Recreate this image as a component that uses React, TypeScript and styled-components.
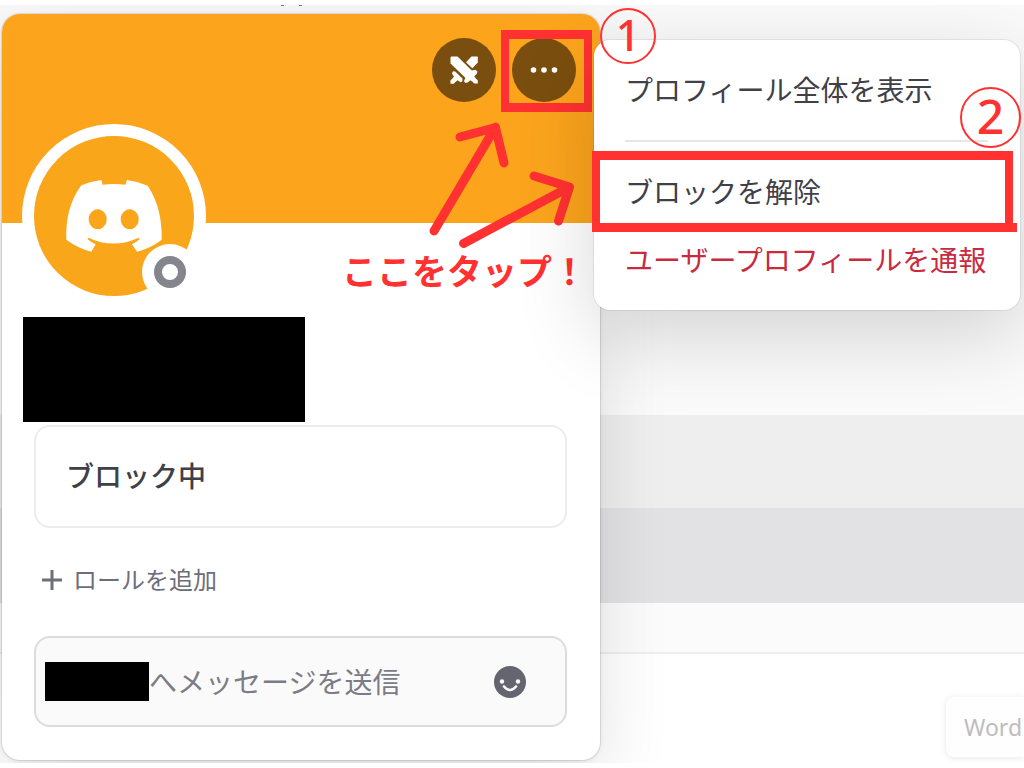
import React from 'react';
import styled, { createGlobalStyle, css } from 'styled-components';

const RED = '#ff3131';

const GlobalStyle = createGlobalStyle`
  *, *::before, *::after { box-sizing: border-box; }
  body {
    margin: 0;
    background: #ffffff;
    font-family: "Noto Sans", "Noto Sans CJK JP", sans-serif;
    color: #3f4048;
  }
  button, input {
    font: inherit;
    color: inherit;
    border: 0;
    background: none;
    padding: 0;
    margin: 0;
  }
  button { cursor: pointer; }
`;

const Page = styled.main`
  padding: 5px 0;
`;

const Scene = styled.div`
  display: grid;
  grid-template-columns: minmax(0, 1fr);
  overflow: hidden;
`;

/* Chat window behind the popout */
const Backdrop = styled.div`
  grid-area: 1 / 1;
  display: flex;
  flex-direction: column;
`;

const Band = styled.div<{ $tone: string; $height: number }>`
  height: ${(p) => p.$height}px;
  background: ${(p) => p.$tone};
`;

const CutText = styled.svg`
  display: block;
  margin-left: 280px;
`;

const Composer = styled.div`
  flex: 1;
  display: flex;
  justify-content: flex-end;
  align-items: flex-start;
  padding-top: 43px;
  border-top: 2px solid #eeeeee;
  background: #ffffff;
`;

const WordChip = styled.div`
  width: 78px;
  height: 60px;
  padding-left: 18px;
  border-radius: 8px 0 0 8px;
  background: #fefefe;
  box-shadow: 0 1px 6px rgba(0, 0, 0, 0.1);
  font-size: 23px;
  line-height: 60px;
  color: #bdbdbd;
`;

const Foreground = styled.div`
  grid-area: 1 / 1;
  display: flex;
  align-items: flex-start;
  padding: 9px 4px 3px 2px;
`;

const Card = styled.section`
  position: relative;
  flex: 598 1 0;
  min-width: 0;
  border-radius: 18px;
  background: #ffffff;
  box-shadow: 0 0 0 1px rgba(0, 0, 0, 0.08), 0 1px 4px rgba(0, 0, 0, 0.1),
    0 20px 72px rgba(0, 0, 0, 0.12);
`;

const Banner = styled.div`
  display: flex;
  justify-content: flex-end;
  align-items: flex-start;
  gap: 16px;
  height: 209px;
  padding: 24px 24px 0;
  border-radius: 18px 18px 0 0;
  background: #fca41c;
`;

const RoundButton = styled.button`
  position: relative;
  display: flex;
  align-items: center;
  justify-content: center;
  width: 64px;
  height: 64px;
  border-radius: 50%;
  background: #7a4e0e;
  color: #ffffff;
`;

const ButtonFrame = styled.span`
  position: absolute;
  inset: -8px -16px -10px -11px;
  border: solid ${RED};
  border-width: 9px 8px;
`;

const CardBody = styled.div`
  display: flex;
  flex-direction: column;
  align-items: flex-start;
  padding: 0 33px 33px 32px;
`;

const Avatar = styled.div`
  position: relative;
  display: flex;
  align-items: center;
  justify-content: center;
  width: 184px;
  height: 184px;
  margin: -99px 0 0 -12px;
  border: 12px solid #ffffff;
  border-radius: 50%;
  background: #faa61a;
`;

const Status = styled.span`
  position: absolute;
  right: -4px;
  bottom: -4px;
  width: 56px;
  height: 56px;
  padding: 12px;
  border-radius: 50%;
  background: #ffffff;

  &::before {
    content: "";
    display: block;
    height: 32px;
    border: 8px solid #84858d;
    border-radius: 50%;
  }
`;

const HiddenName = styled.div`
  width: 282px;
  height: 105px;
  margin: 9px 0 0 -11px;
  background: #000000;
`;

const Notice = styled.div`
  align-self: stretch;
  height: 103px;
  margin-top: 3px;
  padding-left: 30px;
  border: 2px solid #ececec;
  border-radius: 16px;
  font-size: 28px;
  font-weight: 500;
  line-height: 98px;
`;

const RoleButton = styled.button`
  display: flex;
  align-items: center;
  gap: 10px;
  margin: 34px 0 38px;
  padding-left: 7px;
  font-size: 24px;
  line-height: 36px;
  color: #6d6e78;
`;

const MessageBox = styled.form`
  align-self: stretch;
  display: flex;
  align-items: center;
  height: 91px;
  padding: 0 39px 0 9px;
  border: 2px solid #dcdcdd;
  border-radius: 16px;
  background: #fafafa;
`;

const HiddenRecipient = styled.span`
  flex: none;
  width: 104px;
  height: 39px;
  background: #000000;
`;

const MessageInput = styled.input`
  flex: 1;
  min-width: 0;
  height: 42px;
  font-size: 28px;
  outline: 0;

  &::placeholder {
    color: #7b7c85;
    opacity: 1;
  }
`;

const EmojiButton = styled.button`
  display: flex;
`;

const Callout = styled.div`
  position: absolute;
  top: 104px;
  right: 13px;
  display: flex;
  flex-direction: column;
  color: ${RED};
  font-size: 35px;
  font-weight: 700;
  line-height: 36px;
  white-space: nowrap;
  pointer-events: none;
`;

const Arrows = styled.svg`
  align-self: flex-end;
  margin: 0 3px -4px 0;
`;

const Menu = styled.div`
  position: relative;
  flex: 426 1 0;
  min-width: 0;
  margin: 26px 0 0 -6px;
  padding: 16px 0;
  border-radius: 16px;
  background: #ffffff;
  box-shadow: 0 0 0 1px rgba(0, 0, 0, 0.07), 0 24px 80px rgba(0, 0, 0, 0.16);
`;

const MenuItem = styled.button<{ $danger?: boolean }>`
  position: relative;
  display: block;
  width: 100%;
  padding: 0 31px;
  font-size: 28px;
  line-height: 68px;
  text-align: left;
  white-space: nowrap;
  ${(p) =>
    p.$danger &&
    css`
      color: #c92a3e;
    `}
`;

const Separator = styled.hr`
  height: 2px;
  margin: 16px 32px 16px 31px;
  border: 0;
  background: #e6e6e7;
`;

const ItemFrame = styled.span`
  position: absolute;
  inset: -7px 7px -6px -2px;
  border: solid ${RED};
  border-width: 9px 8px;

  &::after {
    content: "";
    position: absolute;
    right: -12px;
    bottom: -9px;
    width: 12px;
    height: 9px;
    background: ${RED};
  }
`;

const StepBadge = styled.span<{ $size: number; $font: number }>`
  position: absolute;
  display: flex;
  align-items: center;
  justify-content: center;
  width: ${(p) => p.$size}px;
  height: ${(p) => p.$size}px;
  padding-bottom: 4px;
  border: 2px solid ${RED};
  border-radius: 50%;
  color: ${RED};
  font-family: "Noto Sans", sans-serif;
  font-size: ${(p) => p.$font}px;
  font-weight: 500;
  line-height: 1;
`;

const FirstStep = styled(StepBadge)`
  top: -32px;
  left: 6px;
`;

const SecondStep = styled(StepBadge)`
  top: 47px;
  right: -1px;
`;

const SwordsIcon = () => (
  <svg width="28" height="28" viewBox="0 0 28 28" aria-hidden="true">
    <path d="M21.500 .5h5.500q.8 0 .8.8V6.500L22.300 12.200 16 6.200Z" fill="currentColor" />
    <path d="M1.300.5H7.500L21.800 14.600 25.500 13.800 27.500 15.800 26.500 18.300 24.200 20.300 26 22.800 27.800 24.300V27.500H24.300L22.800 26 20.300 24.200 18 26.300 15.600 27 14 25.200 15.300 21.800.5 7.500V1.300Z" fill="currentColor" />
    <path d="M3 15.200 5.200 15.500 12.500 22.600 12.300 25.500 10.300 26.300 7.700 24.300 5.400 26 3.800 27.800H.5V24.300L2.300 22.800 4 20.500 1.900 17.500Z" fill="currentColor" />
  </svg>
);

const DotsIcon = () => (
  <svg width="28" height="28" viewBox="0 0 28 28" fill="currentColor" aria-hidden="true">
    <circle cx="3.5" cy="14" r="2.8" />
    <circle cx="14" cy="14" r="2.8" />
    <circle cx="24.5" cy="14" r="2.8" />
  </svg>
);

const LogoIcon = () => (
  <svg width="100" height="75" viewBox="191 537 300 225" aria-hidden="true">
    <path
      fill="#ffffff"
      fillRule="evenodd"
      d="M243 556Q270 544 303 540L307 554Q341 550 375 554L380 540Q412 544 442 557Q486 622 484 719Q452 744 410 755L395 733Q408 727 418 718L415 713Q340 748 264 713L262 718Q272 727 286 733L273 755Q231 744 198 719Q194 622 243 556ZM292 628a27 30 0 1 0 .1 0ZM388 628a27 30 0 1 0 .1 0Z"
    />
  </svg>
);

const PlusIcon = () => (
  <svg width="22" height="22" viewBox="0 0 22 22" aria-hidden="true">
    <path d="M11 1v20M1 11h20" stroke="currentColor" strokeWidth="3" />
  </svg>
);

const SmileIcon = () => (
  <svg width="32" height="32" viewBox="0 0 32 32" aria-hidden="true">
    <circle cx="16" cy="16" r="16" fill="#64656f" />
    <circle cx="8" cy="15.5" r="2.2" fill="#fafafa" />
    <circle cx="24" cy="15.5" r="2.2" fill="#fafafa" />
    <path d="M10 20.500q6 7 12 0" stroke="#fafafa" strokeWidth="2.6" fill="none" strokeLinecap="round" />
  </svg>
);

export default function App() {
  return (
    <>
      <GlobalStyle />
      <Page>
        <Scene>
          <Backdrop>
            <Band $tone="#fafafa" $height={410}>
              <CutText width="24" height="2" viewBox="0 0 24 2" aria-hidden="true">
                <path d="M1 0h3v1H1zM19 0h3v1h-3z" fill="#77777c" />
              </CutText>
            </Band>
            <Band $tone="#eeeeee" $height={93} />
            <Band $tone="#e2e2e4" $height={95} />
            <Band $tone="#fbfbfb" $height={49} />
            <Composer>
              <WordChip>Word</WordChip>
            </Composer>
          </Backdrop>

          <Foreground>
            <Card>
              <Banner>
                <RoundButton type="button" aria-label="ゲーム">
                  <SwordsIcon />
                </RoundButton>
                <RoundButton type="button" aria-label="その他">
                  <DotsIcon />
                  <ButtonFrame />
                </RoundButton>
              </Banner>
              <CardBody>
                <Avatar>
                  <LogoIcon />
                  <Status />
                </Avatar>
                <HiddenName />
                <Notice>ブロック中</Notice>
                <RoleButton type="button">
                  <PlusIcon />
                  ロールを追加
                </RoleButton>
                <MessageBox onSubmit={(e) => e.preventDefault()}>
                  <HiddenRecipient />
                  <MessageInput
                    type="text"
                    aria-label="メッセージ"
                    placeholder="へメッセージを送信"
                  />
                  <EmojiButton type="button" aria-label="絵文字">
                    <SmileIcon />
                  </EmojiButton>
                </MessageBox>
              </CardBody>
              <Callout>
                <Arrows width="160" height="140" viewBox="0 0 160 140" aria-hidden="true">
                  <g
                    fill="none"
                    stroke="currentColor"
                    strokeWidth="9"
                    strokeLinecap="round"
                    strokeLinejoin="round"
                  >
                    <path d="M10 113 71.500 9M36 19 71.500 9.500 80 45" />
                    <path d="M39.500 125.500 145.500 69M110 58 145.500 69 134.500 103" />
                  </g>
                </Arrows>
                ここをタップ！
              </Callout>
            </Card>

            <Menu role="menu">
              <MenuItem type="button" role="menuitem">
                プロフィール全体を表示
              </MenuItem>
              <Separator />
              <MenuItem type="button" role="menuitem">
                ブロックを解除
                <ItemFrame />
              </MenuItem>
              <MenuItem type="button" role="menuitem" $danger>
                ユーザープロフィールを通報
              </MenuItem>
              <FirstStep $size={56} $font={43}>
                1
              </FirstStep>
              <SecondStep $size={61} $font={48}>
                2
              </SecondStep>
            </Menu>
          </Foreground>
        </Scene>
      </Page>
    </>
  );
}
